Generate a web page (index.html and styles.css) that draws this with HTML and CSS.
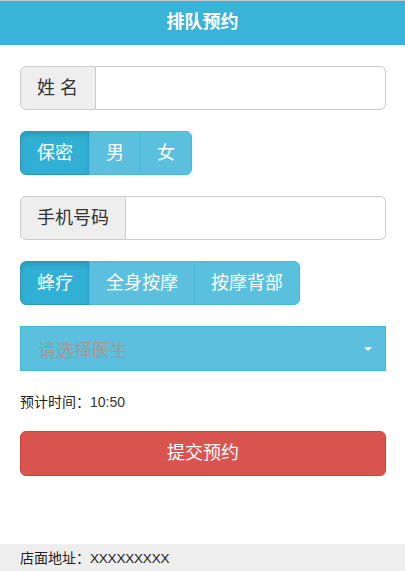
FILE: index.html
```html
<!DOCTYPE html>
<html lang="zh">
<head>
<meta charset="utf-8">
<title>排队预约</title>
<link rel="stylesheet" href="styles.css">
</head>
<body>
<header class="topbar">排队预约</header>
<main class="content">
  <div class="input-group">
    <span class="addon addon-name">姓 名</span>
    <span class="field"></span>
  </div>
  <div class="btn-group">
    <span class="seg active">保密</span>
    <span class="seg">男</span>
    <span class="seg">女</span>
  </div>
  <div class="input-group">
    <span class="addon">手机号码</span>
    <span class="field"></span>
  </div>
  <div class="btn-group">
    <span class="seg active">蜂疗</span>
    <span class="seg">全身按摩</span>
    <span class="seg">按摩背部</span>
  </div>
  <div class="select">
    <span class="placeholder">请选择医生</span>
    <span class="caret"></span>
  </div>
  <p class="eta">预计时间：<span class="time">10:50</span></p>
  <div class="submit">提交预约</div>
</main>
<footer class="footer">店面地址：<span class="addr">XXXXXXXXX</span></footer>
</body>
</html>
```

FILE: styles.css
```css
* { box-sizing: border-box; }
html, body { margin: 0; padding: 0; }
body {
  font-family: "Liberation Sans", "Noto Sans CJK SC", sans-serif;
  color: #333;
  background: #fff;
  min-height: 100vh;
  display: flex;
  flex-direction: column;
}
.topbar {
  border-top: 1px solid #c8c8c8;
  height: 45px;
  background: #39b3d7;
  color: #fff;
  font-weight: bold;
  font-size: 18px;
  text-align: center;
  line-height: 43px;
}
.content {
  padding: 21px 19px 0 20px;
  display: flex;
  flex-direction: column;
}
.input-group {
  display: flex;
  height: 44px;
  margin-bottom: 21px;
}
.addon {
  background: #eee;
  border: 1px solid #ccc;
  border-radius: 6px 0 0 6px;
  padding: 0 16px;
  line-height: 42px;
  font-size: 18px;
  color: #333;
  white-space: nowrap;
}
.addon-name { padding-right: 17px; }
.field {
  flex: 1;
  border: 1px solid #ccc;
  border-left: 0;
  border-radius: 0 6px 6px 0;
  background: #fff;
}
.btn-group {
  display: flex;
  align-self: flex-start;
  height: 44px;
  margin-bottom: 21px;
}
.seg {
  background: #5bc0de;
  border: 1px solid #46b8da;
  color: #fff;
  font-size: 18px;
  line-height: 42px;
  padding: 0 16px;
  margin-left: -1px;
}
.seg:first-child {
  margin-left: 0;
  border-radius: 6px 0 0 6px;
}
.seg:last-child { border-radius: 0 6px 6px 0; }
.seg.active {
  background: #31b0d5;
  border-color: #269abc;
  box-shadow: inset 0 3px 5px rgba(0, 0, 0, 0.125);
}
.select {
  height: 45px;
  background: #5bc0de;
  border: 1px solid #46b8da;
  display: flex;
  align-items: center;
  justify-content: space-between;
  padding: 0 13px 0 17px;
  margin-bottom: 21px;
}
.placeholder {
  color: #a09a96;
  font-size: 18px;
}
.caret {
  width: 0;
  height: 0;
  border-left: 4px solid transparent;
  border-right: 4px solid transparent;
  border-top: 4px solid #fff;
}
.eta {
  margin: 0 0 19px;
  font-size: 14px;
  line-height: 20px;
  color: #222;
}
.time { color: #333; }
.submit {
  height: 45px;
  background: #d9534f;
  border: 1px solid #d43f3a;
  border-radius: 6px;
  color: #fff;
  font-size: 18px;
  line-height: 43px;
  text-align: center;
}
.footer {
  margin-top: auto;
  height: 27px;
  background: #eee;
  font-size: 14px;
  line-height: 28px;
  padding-left: 20px;
  color: #222;
}
.addr { font-size: 13.5px; letter-spacing: -0.2px; }
```
